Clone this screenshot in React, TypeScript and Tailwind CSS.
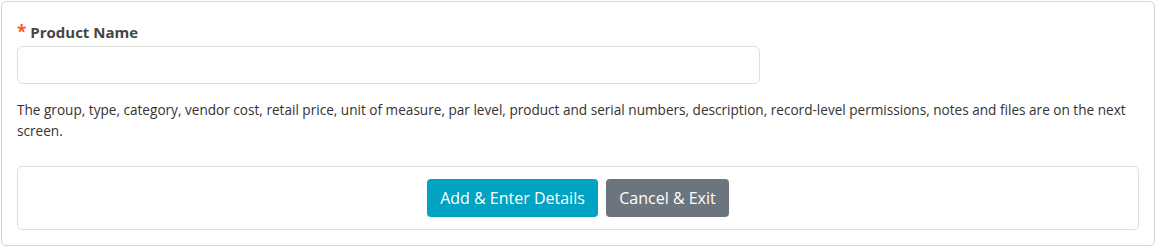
export default function App() {
  return (
    <div className="w-[1156px] h-[247px] bg-white p-px" style={{ fontFamily: '"Open Sans", "Liberation Sans", sans-serif' }}>
      <div className="h-[245px] border border-[#d4d4d4] rounded-[5px] px-[15px] pt-[20px]">
        <div className="flex items-center gap-[4px] text-[15px] font-bold text-[#454545] leading-[20px]">
          <span className="text-[#f15a24] text-[17px] leading-[20px]">*</span>
          <span>Product Name</span>
        </div>
        <input className="mt-[4px] block w-[743px] h-[38px] border border-[#dedede] rounded-[6px] px-3 text-[14px] outline-none" />
        <p className="mt-[15px] text-[13.6px] leading-[21px] text-[#333333] whitespace-nowrap">
          The group, type, category, vendor cost, retail price, unit of measure, par level, product and serial numbers, description, record-level permissions, notes and files are on the next
          <br />
          screen.
        </p>
        <div className="mt-[25px] w-[1122px] h-[64px] border border-[#dedede] rounded-[5px] flex items-center justify-center gap-[8px]">
          <button className="h-[38px] w-[171px] bg-[#00a3c1] text-white text-[16px] rounded-[4px]">Add &amp; Enter Details</button>
          <button className="h-[38px] w-[123px] bg-[#6c757d] text-white text-[16px] rounded-[4px]">Cancel &amp; Exit</button>
        </div>
      </div>
    </div>
  );
}
